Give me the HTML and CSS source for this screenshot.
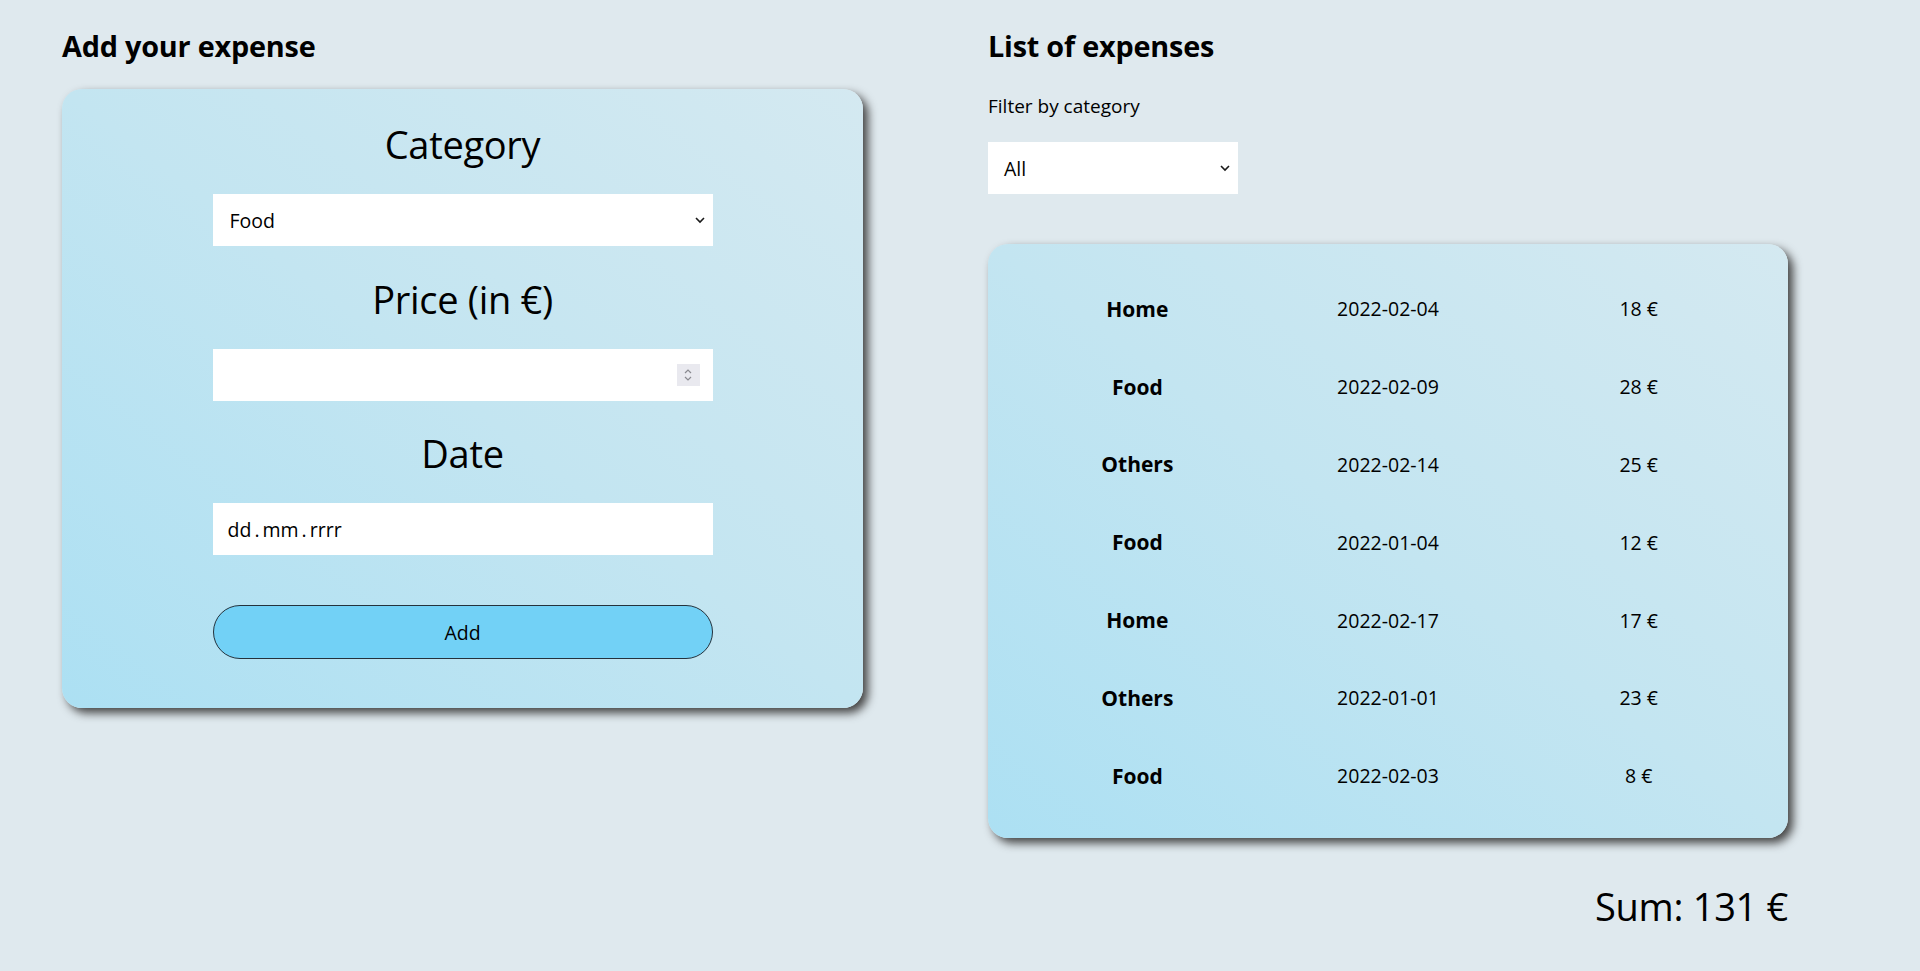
FILE: index.html
```html
<!DOCTYPE html>
<html lang="en">
<head>
<meta charset="utf-8">
<title>Expenses</title>
<link rel="stylesheet" href="styles.css">
</head>
<body>
<main class="page">
  <section class="col col-left">
    <h1 class="title">Add your expense</h1>
    <form class="card form-card">
      <h2 class="label">Category</h2>
      <div class="field select-field">
        <span class="field-text">Food</span>
        <svg class="chev" width="12" height="8" viewBox="0 0 12 8"><path d="M2 2 L6 6 L10 2" fill="none" stroke="#1a1a1a" stroke-width="1.6"/></svg>
      </div>
      <h2 class="label">Price (in €)</h2>
      <div class="field number-field">
        <span class="spinner">
          <svg width="10" height="16" viewBox="0 0 10 16"><path d="M2 6 L5 3 L8 6" fill="none" stroke="#8a8a90" stroke-width="1.2"/><path d="M2 10 L5 13 L8 10" fill="none" stroke="#8a8a90" stroke-width="1.2"/></svg>
        </span>
      </div>
      <h2 class="label">Date</h2>
      <div class="field date-field">
        <span>dd</span><span class="dot">.</span><span>mm</span><span class="dot">.</span><span>rrrr</span>
      </div>
      <button type="button" class="add-btn">Add</button>
    </form>
  </section>
  <section class="col col-right">
    <h1 class="title">List of expenses</h1>
    <p class="filter-label">Filter by category</p>
    <div class="field filter-select">
      <span class="field-text">All</span>
      <svg class="chev" width="12" height="8" viewBox="0 0 12 8"><path d="M2 2 L6 6 L10 2" fill="none" stroke="#1a1a1a" stroke-width="1.6"/></svg>
    </div>
    <div class="card list-card">
      <div class="row"><span class="cat">Home</span><span>2022-02-04</span><span>18 €</span></div>
      <div class="row"><span class="cat">Food</span><span>2022-02-09</span><span>28 €</span></div>
      <div class="row"><span class="cat">Others</span><span>2022-02-14</span><span>25 €</span></div>
      <div class="row"><span class="cat">Food</span><span>2022-01-04</span><span>12 €</span></div>
      <div class="row"><span class="cat">Home</span><span>2022-02-17</span><span>17 €</span></div>
      <div class="row"><span class="cat">Others</span><span>2022-01-01</span><span>23 €</span></div>
      <div class="row"><span class="cat">Food</span><span>2022-02-03</span><span>8 €</span></div>
    </div>
    <div class="sum">Sum: 131 €</div>
  </section>
</main>
</body>
</html>
```
FILE: styles.css
```css
* { box-sizing: border-box; }
html, body {
  margin: 0;
  padding: 0;
  background: #dfe9ee;
  font-family: "Open Sans", "Noto Sans", sans-serif;
  color: #000;
}
.page {
  display: flex;
  gap: 125px;
  padding: 27px 0 0 62px;
  min-height: 971px;
}
.col { display: flex; flex-direction: column; }
.col-left { width: 801px; }
.col-right { width: 800px; }
.title {
  margin: 0;
  font-size: 28.8px;
  font-weight: 700;
  line-height: 38px;
  letter-spacing: -0.2px;
}
.card {
  border-radius: 20px;
  background: linear-gradient(to top right, #ace0f3 0%, #c3e5f1 50%, #d4e9f1 100%);
  box-shadow: 5px 5px 10px #444;
}
.form-card {
  margin-top: 24px;
  display: flex;
  flex-direction: column;
  align-items: center;
  padding: 29px 0 49px;
}
.label {
  margin: 26.5px 0 24px;
  font-size: 38px;
  font-weight: 400;
  line-height: 52px;
  height: 52px;
  letter-spacing: -0.3px;
}
.label:first-child { margin-top: 0; }
.field {
  position: relative;
  width: 500px;
  height: 52px;
  background: #fff;
  display: flex;
  align-items: center;
  font-size: 19.5px;
}
.select-field, .filter-select {
  justify-content: space-between;
  padding: 0 7px 0 17px;
}
.chev { display: block; }
.number-field { justify-content: flex-end; padding-right: 13px; }
.spinner {
  width: 23px;
  height: 22px;
  background: #e9e9ef;
  display: flex;
  align-items: center;
  justify-content: center;
}
.date-field { padding-left: 15px; }
.date-field .dot { padding: 0 3px; }
.add-btn {
  margin-top: 50px;
  width: 500px;
  height: 54px;
  border: 1.5px solid #24323c;
  border-radius: 27px;
  background: #72d1f6;
  font-family: inherit;
  font-size: 19.5px;
  color: #000;
  padding: 0;
}
.filter-label {
  margin: 28px 0 23px;
  font-size: 19px;
  line-height: 26px;
}
.filter-select {
  width: 250px;
  height: 52px;
  padding: 0 7px 0 16px;
}
.list-card {
  margin-top: 50px;
  padding: 26px 24px 23px;
}
.row {
  display: grid;
  grid-template-columns: repeat(3, 1fr);
  height: 77.8px;
  align-items: center;
  text-align: center;
  font-size: 19.5px;
}
.cat { font-weight: 700; font-size: 21px; }
.sum {
  margin-top: 42px;
  align-self: flex-end;
  font-size: 38px;
  line-height: 52px;
  letter-spacing: -0.3px;
}
```
